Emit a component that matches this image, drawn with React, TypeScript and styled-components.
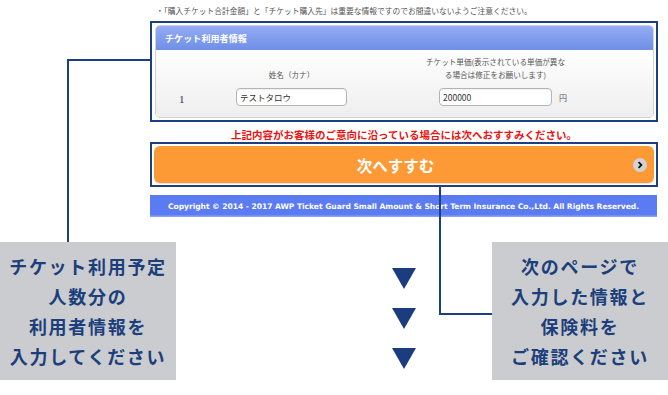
import React from "react";
import styled, { createGlobalStyle } from "styled-components";

const Global = createGlobalStyle`
  html, body { margin: 0; padding: 0; background: #fff; }
  body { width: 668px; height: 395px; overflow: hidden; }
  * { box-sizing: border-box; }
`;

const NAVY = "#1b3f80";
const JP = `"Noto Sans CJK JP", "Noto Sans", sans-serif`;

const Frame = styled.div`
  position: relative;
  width: 668px;
  height: 395px;
  font-family: ${JP};
`;

const Page = styled.div`
  margin-left: 150px;
  width: 508px;
  display: flex;
  flex-direction: column;
`;

const Notice = styled.div`
  height: 21px;
  padding: 5px 0 0 6px;
  font-size: 7.75px;
  line-height: 12px;
  color: #555;
  white-space: nowrap;
`;

const Outline = styled.div<{ $pad: string }>`
  border: 2px solid ${NAVY};
  padding: ${(p) => p.$pad};
  background: #fff;
`;

const Panel = styled.div`
  height: 93px;
  display: flex;
  flex-direction: column;
  border-radius: 5px;
  overflow: hidden;
  border: 1px solid #d2d2d2;
`;

const PanelHeader = styled.div`
  height: 24px;
  flex: none;
  padding-left: 9px;
  display: flex;
  align-items: center;
  background: linear-gradient(#93acf4, #6f8ee6);
  color: #fff;
  font-weight: bold;
  font-size: 9px;
  letter-spacing: 0.1px;
`;

const PanelBody = styled.div`
  flex: 1;
  padding-top: 5px;
  display: flex;
  flex-direction: column;
  gap: 7px;
  background: linear-gradient(#ffffff, #eeeeee);
  color: #555;
`;

const Row = styled.div<{ $align: string }>`
  display: flex;
  align-items: ${(p) => p.$align};
`;

const Cell = styled.div<{ $w: number }>`
  width: ${(p) => p.$w}px;
  flex: none;
  display: flex;
  justify-content: center;
`;

const HeadText = styled.div`
  font-size: 7.6px;
  line-height: 13px;
  text-align: center;
  white-space: nowrap;
`;

const Num = styled.div`
  width: 80px;
  padding-left: 23px;
  padding-top: 3px;
  font-family: "Liberation Serif", serif;
  font-size: 11px;
  color: #333;
`;

const Field = styled.input<{ $w: number }>`
  width: ${(p) => p.$w}px;
  height: 18px;
  border: 1px solid #b4b4b4;
  border-radius: 4px;
  background: #fff;
  padding: 0 3px;
  font-family: ${JP};
  font-size: 8.5px;
  color: #333;
  outline: none;
  box-shadow: inset 0 1px 1px rgba(0,0,0,0.06);
`;

const Yen = styled.div`
  font-size: 8px;
  color: #555;
  margin-left: 7px;
`;

const Alert = styled.div`
  height: 20px;
  padding-top: 6px;
  text-align: center;
  color: #ee1111;
  font-weight: bold;
  font-size: 10.5px;
  line-height: 14px;
  white-space: nowrap;
`;

const NextButton = styled.div`
  height: 37px;
  border-radius: 6px;
  background: #fd9a35;
  display: flex;
  align-items: center;
  padding-right: 7px;
  box-shadow: 0 1px 1px rgba(0,0,0,0.12);
`;

const NextLabel = styled.div`
  flex: 1;
  text-align: center;
  color: #fff;
  font-weight: bold;
  font-size: 15.5px;
  padding-left: 4px;
`;

const Dot = styled.div`
  width: 14px;
  height: 14px;
  border-radius: 50%;
  background: #d2d2d2;
  display: flex;
  align-items: center;
  justify-content: center;
`;

const Footer = styled.div`
  margin-top: 8px;
  width: 507px;
  height: 22px;
  background: linear-gradient(#5a7bf2 0%, #5a7bf2 88%, #93a9f6 100%);
  color: #fff;
  font-family: "DejaVu Sans", Verdana, sans-serif;
  font-weight: bold;
  font-size: 7.6px;
  display: flex;
  align-items: center;
  justify-content: center;
  white-space: nowrap;
  letter-spacing: -0.05px;
`;

const Annotations = styled.div`
  margin-top: 25px;
  display: flex;
  align-items: flex-start;
`;

const Note = styled.div<{ $ml?: number }>`
  width: 176px;
  height: 138px;
  margin-left: ${(p) => p.$ml ?? 0}px;
  background: #cbcccf;
  color: #1c3f7c;
  font-weight: bold;
  font-size: 18px;
  letter-spacing: 1.7px;
  line-height: 30px;
  padding-top: 9px;
  text-align: center;
  white-space: nowrap;
`;

const Arrows = styled.div`
  margin-left: 216px;
  padding-top: 26px;
  display: flex;
  flex-direction: column;
  gap: 19px;
`;

const Line = styled.div<{ $x: number; $y: number; $w: number; $h: number }>`
  position: absolute;
  left: ${(p) => p.$x}px;
  top: ${(p) => p.$y}px;
  width: ${(p) => p.$w}px;
  height: ${(p) => p.$h}px;
  background: ${NAVY};
`;

const Tri = () => (
  <svg width="24" height="21" viewBox="0 0 24 21">
    <polygon points="0,0 24,0 12,21" fill="#1b3d80" />
  </svg>
);

export default function App() {
  return (
    <>
      <Global />
      <Frame>
        <Page>
          <Notice>・「購入チケット合計金額」と「チケット購入先」は重要な情報ですのでお間違いないようご注意ください。</Notice>
          <Outline $pad="2px 2px 2px 3px">
            <Panel>
              <PanelHeader>チケット利用者情報</PanelHeader>
              <PanelBody>
                <Row $align="flex-end">
                  <Cell $w={80} />
                  <Cell $w={111}>
                    <HeadText>姓名（カナ）</HeadText>
                  </Cell>
                  <Cell $w={92} />
                  <Cell $w={113}>
                    <HeadText>
                      チケット単価(表示されている単価が異な
                      <br />
                      る場合は修正をお願いします)
                    </HeadText>
                  </Cell>
                </Row>
                <Row $align="center">
                  <Num>1</Num>
                  <Field $w={111} defaultValue="テストタロウ" />
                  <Cell $w={92} />
                  <Field $w={113} defaultValue="200000" />
                  <Yen>円</Yen>
                </Row>
              </PanelBody>
            </Panel>
          </Outline>
          <Alert>上記内容がお客様のご意向に沿っている場合には次へおすすみください。</Alert>
          <Outline $pad="2px">
            <NextButton>
              <NextLabel>次へすすむ</NextLabel>
              <Dot>
                <svg width="8" height="8" viewBox="0 0 8 8">
                  <path d="M2.6 1.2 L5.4 4 L2.6 6.8" stroke="#111" strokeWidth="1.8" fill="none" />
                </svg>
              </Dot>
            </NextButton>
          </Outline>
          <Footer>Copyright © 2014 - 2017 AWP Ticket Guard Small Amount &amp; Short Term Insurance Co.,Ltd. All Rights Reserved.</Footer>
        </Page>
        <Annotations>
          <Note>
            チケット利用予定
            <br />
            人数分の
            <br />
            利用者情報を
            <br />
            入力してください
          </Note>
          <Arrows>
            <Tri />
            <Tri />
            <Tri />
          </Arrows>
          <Note $ml={76}>
            次のページで
            <br />
            入力した情報と
            <br />
            保険料を
            <br />
            ご確認ください
          </Note>
        </Annotations>
        <Line $x={67} $y={59} $w={2} $h={183} />
        <Line $x={67} $y={59} $w={83} $h={2} />
        <Line $x={439} $y={187} $w={2} $h={128} />
        <Line $x={439} $y={313} $w={53} $h={2} />
      </Frame>
    </>
  );
}
